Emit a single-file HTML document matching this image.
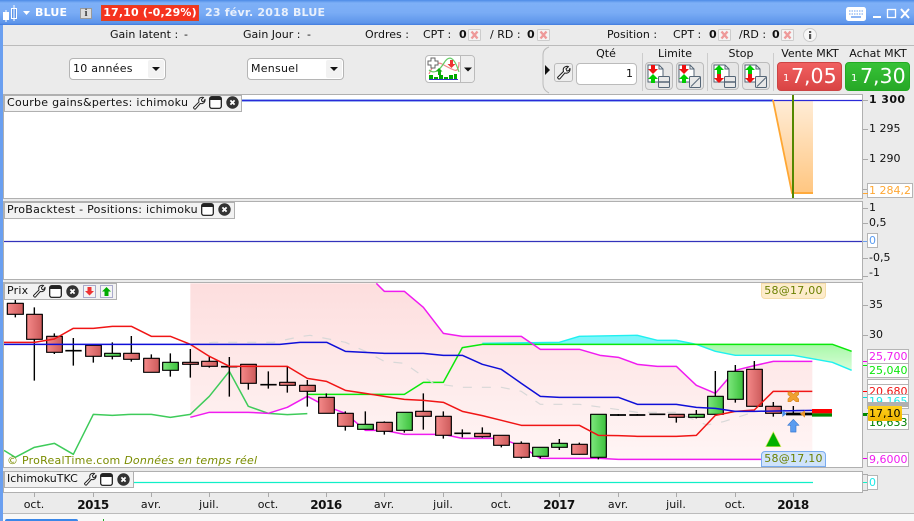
<!DOCTYPE html>
<html><head><meta charset="utf-8">
<style>
html,body{margin:0;padding:0}
body{width:914px;height:521px;overflow:hidden;position:relative;background:#ebebeb;font-family:"DejaVu Sans",sans-serif;font-size:11px;color:#111}
.t{position:absolute;white-space:nowrap;line-height:14px}
.c{transform:translateX(-50%)}
.b{font-weight:bold}
.a{position:absolute;box-sizing:border-box}
.p{position:absolute;background:#fff;border:1px solid #b0b0b0;box-sizing:border-box}
.tb{position:absolute;background:#f2f2f2;border:1px solid #b0b0b0;box-sizing:border-box;height:17px}
.lb{position:absolute;left:867px;width:42px;height:15px;background:#fff;border:1px solid #b5b5b5;box-sizing:border-box;font-size:11px;line-height:13px;padding-left:1px;white-space:nowrap;overflow:hidden}
.tk{position:absolute;height:1px;background:#aaa;left:863px;width:5px}
.sel{position:absolute;height:22px;width:97px;top:58px;background:#fff;border:1px solid #b5b5b5;border-radius:4px;box-sizing:border-box}
.btn{position:absolute;top:62px;width:28px;height:28px;background:#e6e6e6;border:1px solid #bbb;border-radius:4px;box-sizing:border-box}
.ttl{letter-spacing:.28px}
.yr{font-size:12px;font-weight:bold;letter-spacing:-.5px}
svg{position:absolute;overflow:visible}
</style></head><body>
<svg width="0" height="0" style="position:absolute"><defs>
<symbol id="wr" viewBox="0 0 14 14"><path d="M1.5 11.5 L7 6 Q6 2.500 9 1.500 Q10.500 1 11.500 1.500 L9.300 3.700 L10.300 5.700 L12.300 5 L13 3 Q13.500 6 11 7.300 Q9.500 8 8.300 7.400 L3.500 13 Q2 13.500 1.500 11.500Z" fill="#fff" stroke="#222" stroke-width="1"/></symbol>
<symbol id="wn" viewBox="0 0 13 13"><rect x=".7" y=".7" width="11.6" height="11.6" rx="2" fill="#fff" stroke="#111" stroke-width="1.2"/><rect x="1" y="1" width="11" height="3" fill="#222"/></symbol>
<symbol id="cl" viewBox="0 0 13 13"><circle cx="6.500" cy="6.500" r="6.200" fill="#333"/><path d="M4.400 4.400L8.600 8.600M8.600 4.400L4.400 8.600" stroke="#fff" stroke-width="1.800"/></symbol>
<symbol id="xb" viewBox="0 0 13 12"><rect x=".5" y=".5" width="12" height="11" rx="1" fill="#f4f4f4" stroke="#ccc"/><path d="M3.500 2.500L9.500 9.500M9.500 2.500L3.500 9.500" stroke="#ee9a9a" stroke-width="2.400"/></symbol>
<symbol id="doc" viewBox="0 0 26 26"><path d="M3 3H14L18 7V20H3Z" fill="#fff" stroke="#567" stroke-width="1"/><path d="M14 3V7H18" fill="none" stroke="#567"/></symbol>
</defs></svg>

<!-- title bar -->
<div class="a" style="left:0;top:0;width:914px;height:25px;background:linear-gradient(#4d8be6 0,#7eb0f7 12%,#7aacf5 50%,#5d95ea 92%,#3f7bdc 100%)"></div>
<svg style="left:0;top:0" width="30" height="25"><rect x="3" y="12" width="6" height="8" fill="#fff"/><path d="M6 10V22" stroke="#fff"/><rect x="11.500" y="8.500" width="5" height="10" fill="#5d95ea" stroke="#fff"/><path d="M14 5V21" stroke="#fff"/><path d="M23 11h7l-3.500 4z" fill="#fff"/></svg>
<div class="t b" style="left:35px;top:6px;color:#fff;letter-spacing:.2px">BLUE</div>
<div class="a" style="left:80px;top:8px;width:12px;height:11px;background:#dcdcdc;border:1px solid #999"></div>
<div class="t b c" style="left:86px;top:6px;color:#444;font-size:11px;font-family:'Liberation Serif',serif">i</div>
<div class="a" style="left:101px;top:5px;width:98px;height:16px;background:#f5331f;border:1px solid #d42"></div>
<div class="t b c" style="left:150px;top:6px;color:#fff;letter-spacing:.15px">17,10 (-0,29%)</div>
<div class="t b" style="left:205px;top:6px;color:#e8f0fc;letter-spacing:.22px">23 févr. 2018 BLUE</div>
<svg style="left:846px;top:6px" width="68" height="18"><rect x="0" y="1" width="20" height="14" rx="2.500" fill="#fff"/><path d="M3 5h14M3 8h14" stroke="#6a9ff0" stroke-dasharray="1.500 1"/><path d="M5 11h10" stroke="#6a9ff0" stroke-width="1.500"/><path d="M27 11h8" stroke="#fff" stroke-width="2"/><rect x="41.500" y="3.500" width="8" height="8" fill="none" stroke="#fff" stroke-width="1.300"/><path d="M55 3L63 12M63 3L55 12" stroke="#fff" stroke-width="2"/></svg>
<div class="a" style="left:0;top:25px;width:3px;height:496px;background:#6a9ff0"></div>

<!-- toolbar row 1 -->
<div class="a" style="left:3px;top:45px;width:911px;height:1px;background:#bbb"></div>
<div class="t" style="left:110px;top:28px">Gain latent :</div><div class="t" style="left:184px;top:28px">-</div>
<div class="t" style="left:243px;top:28px">Gain Jour :</div><div class="t" style="left:307px;top:28px">-</div>
<div class="t" style="left:365px;top:28px">Ordres :</div>
<div class="t" style="left:423px;top:28px">CPT :</div><div class="t b" style="left:459px;top:28px">0</div>
<svg style="left:468px;top:29px" width="13" height="12"><use href="#xb"/></svg>
<div class="t" style="left:490px;top:28px">/ RD :</div><div class="t b" style="left:527px;top:28px">0</div>
<svg style="left:537px;top:29px" width="13" height="12"><use href="#xb"/></svg>
<div class="t" style="left:607px;top:28px">Position :</div>
<div class="t" style="left:673px;top:28px">CPT :</div><div class="t b" style="left:709px;top:28px">0</div>
<svg style="left:718px;top:29px" width="13" height="12"><use href="#xb"/></svg>
<div class="t" style="left:739px;top:28px">/RD :</div><div class="t b" style="left:772px;top:28px">0</div>
<svg style="left:781px;top:29px" width="13" height="12"><use href="#xb"/></svg>
<svg style="left:803px;top:28px" width="14" height="14"><circle cx="7" cy="7" r="6.500" fill="#f6f6f6" stroke="#ccc"/><rect x="6" y="6" width="2.200" height="5" fill="#555"/><rect x="6" y="3" width="2.200" height="2" fill="#555"/></svg>

<!-- toolbar row 2 -->
<div class="sel" style="left:69px"></div><div class="t" style="left:73px;top:62px;letter-spacing:.25px">10 années</div>
<svg style="left:148px;top:59px" width="17" height="20"><rect width="16" height="18" y="1" rx="2" fill="#f2f2f2"/><path d="M4 8h8l-4 4z" fill="#111"/></svg>
<div class="sel" style="left:247px"></div><div class="t" style="left:251px;top:62px;letter-spacing:.25px">Mensuel</div>
<svg style="left:326px;top:59px" width="17" height="20"><rect width="16" height="18" y="1" rx="2" fill="#f2f2f2"/><path d="M4 8h8l-4 4z" fill="#111"/></svg>
<div class="a" style="left:425px;top:55px;width:50px;height:28px;background:#fff;border:1px solid #bbb;border-radius:4px"></div>
<div class="a" style="left:460px;top:56px;width:14px;height:26px;background:#eee;border-left:1px solid #bbb;border-radius:0 3px 3px 0"></div>
<svg style="left:426px;top:56px" width="48" height="26"><path d="M3 18Q9 4 16 8T28 14T33 6" fill="none" stroke="#e88" stroke-width="1.200"/><path d="M3 14Q10 20 18 7T33 16" fill="none" stroke="#6c6" stroke-width="1.200"/><path d="M5 2h4v3h3v4H9v3H5V9H2V5h3z" fill="#fff" stroke="#666"/><path d="M13 12l3.500 3.500H15V19h-3v-3.500H9.500z" fill="#1a1"/><path d="M24 4h3v4h2.500L25.500 12 21.500 8H24z" fill="#e33"/><path d="M3 19h4v4H3zM13 19h4v4h-4zM23 19h4v4h-4zM8 21h4v2H8zM18 21h4v2h-4zM28 18h3v5h-3z" fill="#0a0"/><path d="M3 23.500h29" stroke="#33c"/><path d="M38 11.500h8l-4 4z" fill="#111"/></svg>

<svg style="left:540px;top:46px" width="14" height="48"><path d="M9 1Q3 3 3 9V38Q3 44 9 47" fill="none" stroke="#bbb"/><path d="M5 19l5 5-5 5z" fill="#111"/></svg>
<div class="a" style="left:554px;top:63px;width:19px;height:19px;background:#eee;border:1px solid #bbb;border-radius:3px"></div>
<svg style="left:556px;top:65px" width="15" height="15"><use href="#wr" width="15" height="15"/></svg>
<div class="t c" style="left:606px;top:47px">Qté</div>
<div class="a" style="left:576px;top:63px;width:61px;height:22px;background:#fff;border:1px solid #bbb;border-radius:4px"></div>
<div class="t" style="left:626px;top:67px">1</div>
<div class="a" style="left:642px;top:53px;width:1px;height:38px;background:#ccc"></div>
<div class="a" style="left:707px;top:53px;width:1px;height:38px;background:#ccc"></div>
<div class="a" style="left:773px;top:53px;width:1px;height:38px;background:#ccc"></div>
<div class="t c" style="left:675px;top:47px">Limite</div>
<div class="t c" style="left:741px;top:47px">Stop</div>
<div class="btn" style="left:645px"></div><div class="btn" style="left:676px"></div><div class="btn" style="left:711px"></div><div class="btn" style="left:742px"></div>
<svg style="left:645px;top:62px" width="130" height="28">
<g><use href="#doc" x="0" y="0" width="26" height="26"/><path d="M6 3h4v4h3l-5 5-5-5h3z" fill="#e11"/><path d="M8 12l5 5h-3v4H6v-4H3z" fill="#0c0"/><rect x="13.500" y="14.500" width="11" height="11" rx="1" fill="#e8e8e8" stroke="#567"/><path d="M14 20h10" stroke="#567" stroke-width="1.500"/></g>
<g transform="translate(31 0)"><use href="#doc" x="0" y="0" width="26" height="26"/><path d="M6 3h4v4h3l-5 5-5-5h3z" fill="#e11"/><path d="M8 12l5 5h-3v4H6v-4H3z" fill="#0c0"/><rect x="13.500" y="14.500" width="11" height="11" rx="1" fill="#e8e8e8" stroke="#567"/><path d="M15 24.500l9-9" stroke="#567"/></g>
<g transform="translate(66 0)"><use href="#doc" x="0" y="0" width="26" height="26"/><path d="M8 3l5 5h-3v4H6V8H3z" fill="#0c0"/><path d="M6 12h4v4h3l-5 5-5-5h3z" fill="#e11"/><rect x="13.500" y="14.500" width="11" height="11" rx="1" fill="#e8e8e8" stroke="#567"/><path d="M14 20h10" stroke="#567" stroke-width="1.500"/></g>
<g transform="translate(97 0)"><use href="#doc" x="0" y="0" width="26" height="26"/><path d="M8 3l5 5h-3v4H6V8H3z" fill="#0c0"/><path d="M6 12h4v4h3l-5 5-5-5h3z" fill="#e11"/><rect x="13.500" y="14.500" width="11" height="11" rx="1" fill="#e8e8e8" stroke="#567"/><path d="M15 24.500l9-9" stroke="#567"/></g>
</svg>
<div class="t c" style="left:810px;top:47px">Vente MKT</div>
<div class="t c" style="left:878px;top:47px">Achat MKT</div>
<div class="a" style="left:777px;top:62px;width:65px;height:29px;background:linear-gradient(#f06060,#d94444);border:1px solid #c44;border-radius:4px"></div>
<div class="a" style="left:845px;top:62px;width:65px;height:29px;background:linear-gradient(#37c237,#26a826);border:1px solid #2a2;border-radius:4px"></div>
<div class="t" style="left:783px;top:72px;color:#fff;font-size:10px">1</div>
<div class="t" style="left:791px;top:65px;color:#fff;font-size:20.500px;line-height:22px">7,05</div>
<div class="t" style="left:851px;top:72px;color:#fff;font-size:10px">1</div>
<div class="t" style="left:860px;top:65px;color:#fff;font-size:20.500px;line-height:22px">7,30</div>

<!-- panels -->
<div class="p" style="left:3px;top:94px;width:860px;height:105px"></div>
<div class="p" style="left:3px;top:201px;width:860px;height:79px"></div>
<div class="p" style="left:3px;top:282px;width:860px;height:186px"></div>
<div class="p" style="left:3px;top:471px;width:860px;height:22px"></div>

<!-- panel 1 & 2 & 4 graphics -->
<svg style="left:0;top:0" width="914" height="521">
<defs><linearGradient id="og" x1="0" y1="0" x2="0" y2="1"><stop offset="0" stop-color="#ffecd6"/><stop offset="1" stop-color="#ffc680"/></linearGradient>
<linearGradient id="pk" x1="0" y1="0" x2="0" y2="1"><stop offset="0" stop-color="#fddede"/><stop offset="1" stop-color="#fff5f5"/></linearGradient>
<linearGradient id="gg" x1="0" y1="0" x2="0" y2="1"><stop offset="0" stop-color="#a8f8a8"/><stop offset="1" stop-color="#d8fdd8"/></linearGradient>
<linearGradient id="rc" x1="0" y1="0" x2="1" y2="0"><stop offset="0" stop-color="#f58a8a"/><stop offset="1" stop-color="#cc5a5a"/></linearGradient>
<linearGradient id="gc" x1="0" y1="0" x2="1" y2="0"><stop offset="0" stop-color="#7ee87e"/><stop offset="1" stop-color="#3cc03c"/></linearGradient></defs>
<path d="M773 101L792 194H813V101Z" fill="url(#og)"/>
<path d="M4 100.500H773" stroke="#a8c4f4" stroke-width="3"/>
<path d="M4 100.500H862" stroke="#2a2ad8" stroke-width="1.300"/>
<path d="M773 100L792 193H813" fill="none" stroke="#ffa733" stroke-width="1.800"/>
<path d="M793 95V198" stroke="#558800" stroke-width="2"/>
<path d="M4 241.500H862" stroke="#3333bb" stroke-width="1.200"/>
<path d="M133 482.500H813" stroke="#10f0c8" stroke-width="1.200"/>

<!-- price panel, zoom coordinates -->
<g transform="translate(0,280) scale(.33333)" fill="none" stroke-linejoin="round">
<clipPath id="clp"><rect x="12" y="9" width="2573" height="552"/></clipPath>
<g clip-path="url(#clp)">
<!-- pink cloud -->
<path d="M571 10H1129L1153 34H1213L1270 82L1330 160L1387 169H1564L1621 208H1738L1800 226L1855 232L1912 253L1972 259L2029 259L2089 316L2146 340L2206 271L2263 257L2320 244L2437 244V538H1855L1800 535H1621L1564 499L1504 475H1387L1330 463H1213L1153 451H1096L1036 400L979 379L922 349L900 362L862 382L805 400L745 397H628L571 412Z" fill="url(#pk)"/>
<!-- cloud fills -->
<path d="M1447 190L1678 187L1738 169H1800L1912 166L1972 181H2029L2089 193H1447Z" fill="#7df6fa"/>
<path d="M2089 193H2497L2555 214V271L2497 247L2380 226H2206L2146 214Z" fill="url(#gg)"/>
<!-- lines -->
<polyline points="1447,190 1678,187 1738,169 1912,166 1972,181 2029,181 2089,193 2146,214 2206,226 2380,226 2497,247 2555,271" stroke="#20f0f0" stroke-width="4.200"/>
<polyline points="12,511 46,532 103,502 163,490 220,523 280,403 337,406 394,403 454,403 511,412 571,403 628,349 688,274 745,379 805,400 862,404 922,401" stroke="#3ecb5a" stroke-width="4.500"/>
<polyline points="922,343 1213,343 1270,307 1330,307 1387,203 1447,193 2497,193 2555,214" stroke="#0be80b" stroke-width="4.500"/>
<polyline points="571,193 640,187 820,187 900,170 930,166 1036,187 1096,214 1153,244 1213,250 1300,310 1387,322 1504,322 1564,334 1621,373 1738,373 1822,384 1912,397 2029,397 2120,435 2170,425 2265,395 2320,390 2440,390" stroke="#d8d8d8" stroke-width="3.600" stroke-dasharray="27 30"/>
<polyline points="571,412 628,397 745,397 805,400 862,382 922,349 979,379 1036,400 1096,451 1153,451 1213,463 1330,463 1387,475 1504,475 1564,499 1621,535 1800,535 1855,538 2283,538" stroke="#f01cf0" stroke-width="4.500"/>
<polyline points="1129,10 1153,34 1213,34 1270,82 1330,160 1387,169 1564,169 1621,208 1738,208 1800,226 1855,232 1912,253 1972,259 2029,259 2089,316 2146,340 2206,271 2263,257 2320,244 2437,244" stroke="#f01cf0" stroke-width="4.500"/>
</g>
<!-- candles -->
<g stroke="#000" stroke-width="4.200">
<path d="M46 60V112M103 82V302M163 160V222M220 174V257M280 195V248M337 187V238M394 168V245M454 223V277M511 220V290M571 207V293M628 228V263M688 231V350M745 253V329M805 274V326M862 259V338M922 300V380M979 340V400M1036 394V452M1096 394V449M1153 424V464M1213 397V458M1270 340V449M1330 394V476M1387 448V472M1447 442V473M1504 466V502M1564 484V536M1621 502V535M1678 477V510M1738 488V524M1795 403V538M1855 402V408M1912 402V407M1972 402V404M2029 403V428M2089 390V415M2146 273V403M2206 255V368M2263 243V380M2320 366V410M2380 378V405"/>
<g fill="url(#rc)" stroke-width="3.600">
<rect x="22" y="70" width="48" height="33"/><rect x="80" y="103" width="47" height="75"/><rect x="140" y="169" width="47" height="48"/><rect x="257" y="196" width="47" height="33"/><rect x="371" y="220" width="47" height="18"/><rect x="431" y="235" width="47" height="42"/><rect x="548" y="247" width="47" height="6"/><rect x="605" y="244" width="47" height="15"/><rect x="722" y="253" width="47" height="57"/><rect x="839" y="307" width="47" height="9"/><rect x="899" y="316" width="47" height="18"/><rect x="956" y="352" width="47" height="48"/><rect x="1013" y="400" width="47" height="39"/><rect x="1130" y="427" width="47" height="27"/><rect x="1247" y="394" width="47" height="15"/><rect x="1307" y="409" width="47" height="57"/><rect x="1424" y="460" width="47" height="10"/><rect x="1481" y="466" width="47" height="30"/><rect x="1541" y="490" width="47" height="42"/><rect x="1715" y="493" width="47" height="30"/><rect x="2006" y="403" width="47" height="9"/><rect x="2240" y="268" width="47" height="111"/><rect x="2297" y="379" width="47" height="21"/>
</g>
<g fill="url(#gc)" stroke-width="3.600">
<rect x="314" y="220" width="47" height="9"/><rect x="488" y="247" width="47" height="24"/><rect x="1073" y="433" width="47" height="15"/><rect x="1190" y="397" width="47" height="54"/><rect x="1598" y="502" width="47" height="27"/><rect x="1655" y="490" width="47" height="12"/><rect x="1772" y="403" width="47" height="129"/><rect x="2066" y="403" width="47" height="9"/><rect x="2123" y="349" width="47" height="54"/><rect x="2183" y="274" width="47" height="84"/>
</g>
<path d="M196 212H245M663 260H712M781 314H830M1363 460H1412M1830 405H1878M1888 405H1936M1948 403H1996" stroke-width="5"/>
<path d="M2358 402H2436" stroke-width="8"/>
</g>
<polyline points="12,187 103,187 163,177 220,145 280,145 337,139 394,139 454,169 511,169 571,193 628,229 688,259 862,259 922,295 979,304 1036,331 1096,340 1153,349 1213,358 1270,361 1330,367 1387,394 1447,407 1504,421 1564,436 1738,436 1795,466 1855,467 1912,469 2029,469 2089,466 2146,406 2206,394 2263,390 2320,334 2437,334" stroke="#f01515" stroke-width="4.500"/>
<polyline points="12,193 571,193 840,193 900,187 980,187 1036,214 1153,220 1270,220 1330,226 1387,226 1447,253 1504,268 1564,310 1621,349 1678,352 1855,352 1912,373 2029,373 2089,382 2146,385 2206,394 2263,394 2437,391" stroke="#0f0fd8" stroke-width="4.500"/>
<!-- trade markers -->
<path d="M2436 387H2496V400H2436Z" fill="#f00"/><path d="M2436 400H2496V410H2436Z" fill="#080"/>
<path d="M2320 455L2297 500H2343Z" fill="#00b000" stroke="#d8e860" stroke-width="2"/>
<path d="M2380 418L2363 436H2372V456H2388V436H2397Z" fill="#5a9cf0" stroke="#3878d0" stroke-width="2"/>
<path d="M2364 336L2372 336L2380 343L2388 336L2396 336V344L2389 350L2396 357V365H2388L2380 358L2372 365H2364V357L2371 350L2364 344Z" fill="#f0a030" stroke="#d88820" stroke-width="2"/>
<path d="M2347 391L2360 401L2347 411Z" fill="#4a90e8"/><path d="M2415 391L2400 401L2415 413Z" fill="#e8932a"/>
</g>
</svg>

<!-- price labels on chart -->
<div class="a" style="left:761px;top:283px;width:65px;height:16px;background:#fdeccb;border:1px solid #f5dca8;border-radius:0 0 4px 4px;text-align:center;color:#6b8000;font-size:11px;letter-spacing:.25px;line-height:14px">58@17,00</div>
<div class="a" style="left:761px;top:451px;width:65px;height:16px;background:#cfe3fb;border:1px solid #79abee;border-radius:4px 4px 0 0;text-align:center;color:#6b8000;font-size:11px;letter-spacing:.25px;line-height:14px">58@17,10</div>
<div class="t" style="left:7px;top:454px;color:#7a8c00;letter-spacing:.23px">© ProRealTime.com <i>Données en temps réel</i></div>

<!-- panel titles -->
<div class="tb" style="left:4px;top:95px;width:238px"></div><div class="t ttl" style="left:7px;top:96px">Courbe gains&amp;pertes: ichimoku</div>
<svg style="left:192px;top:96px" width="14" height="14"><use href="#wr" width="14" height="14"/></svg>
<svg style="left:209px;top:96px" width="13" height="13"><use href="#wn" width="13" height="13"/></svg>
<svg style="left:226px;top:96px" width="13" height="13"><use href="#cl" width="13" height="13"/></svg>
<div class="tb" style="left:4px;top:202px;width:231px"></div><div class="t ttl" style="left:7px;top:203px">ProBacktest - Positions: ichimoku</div>
<svg style="left:201px;top:203px" width="13" height="13"><use href="#wn" width="13" height="13"/></svg>
<svg style="left:218px;top:203px" width="13" height="13"><use href="#cl" width="13" height="13"/></svg>
<div class="tb" style="left:4px;top:283px;width:113px"></div><div class="t" style="left:7px;top:284px;letter-spacing:.2px">Prix</div>
<svg style="left:32px;top:284px" width="14" height="14"><use href="#wr" width="14" height="14"/></svg>
<svg style="left:49px;top:285px" width="13" height="13"><use href="#wn" width="13" height="13"/></svg>
<svg style="left:66px;top:285px" width="13" height="13"><use href="#cl" width="13" height="13"/></svg>
<svg style="left:83px;top:285px" width="30" height="13"><rect x=".5" y=".5" width="12" height="12" fill="#f4f4f4" stroke="#aac"/><path d="M4.500 2h4v4h2.500l-4.500 4.500L2 6h2.500z" fill="#e33"/><rect x="17.500" y=".5" width="12" height="12" fill="#f4f4f4" stroke="#aac"/><path d="M23.500 2L28 6.500h-2.500V11h-4V6.500H19z" fill="#0a0"/></svg>
<div class="tb" style="left:4px;top:471px;width:130px"></div><div class="t" style="left:7px;top:472px">IchimokuTKC</div>
<svg style="left:83px;top:472px" width="14" height="14"><use href="#wr" width="14" height="14"/></svg>
<svg style="left:100px;top:473px" width="13" height="13"><use href="#wn" width="13" height="13"/></svg>
<svg style="left:117px;top:473px" width="13" height="13"><use href="#cl" width="13" height="13"/></svg>

<!-- right axis -->
<div class="tk" style="top:100px"></div><div class="tk" style="top:129px"></div><div class="tk" style="top:159px"></div><div class="tk" style="top:189px"></div>
<div class="t b" style="left:869px;top:93px;letter-spacing:.4px">1 300</div>
<div class="t" style="left:869px;top:122px">1 295</div>
<div class="t" style="left:869px;top:152px">1 290</div>
<div class="lb" style="top:183px;color:#ffa733;width:46px;height:15px">1 284,2</div>
<div class="tk" style="top:193px;background:#ffa733"></div>
<div class="tk" style="top:208px"></div><div class="tk" style="top:223px"></div><div class="tk" style="top:241px;background:#6a9ff0"></div><div class="tk" style="top:258px"></div><div class="tk" style="top:276px"></div>
<div class="t" style="left:869px;top:201px">1</div>
<div class="t" style="left:869px;top:216px">0,5</div>
<div class="lb" style="top:233px;width:11px;color:#5a9cf0">0</div>
<div class="t" style="left:869px;top:251px">-0,5</div>
<div class="t" style="left:869px;top:266px">-1</div>
<div class="tk" style="top:305px"></div><div class="tk" style="top:335px"></div>
<div class="t" style="left:869px;top:298px">35</div>
<div class="t" style="left:869px;top:328px">30</div>
<div class="tk" style="top:361px;background:#e0e"></div><div class="tk" style="top:365px;background:#0e0"></div><div class="tk" style="top:391px;background:#f00"></div><div class="tk" style="top:397px;background:#0dd"></div><div class="tk" style="top:413px;background:#080;height:3px"></div><div class="tk" style="top:458px;background:#e0e"></div>
<div class="lb" style="top:349px;color:#f01cf0">25,700</div>
<div class="lb" style="top:363px;color:#0be80b">25,040</div>
<div class="lb" style="top:379px;height:6px"></div>
<div class="lb" style="top:384px;color:#f01515">20,680</div>
<div class="lb" style="top:394px;color:#20e8e8">19,165</div>
<div class="lb" style="top:414px;height:16px;color:#008000;line-height:16px">16,633</div>
<div class="a" style="left:867px;top:402px;width:42px;height:5px;background:#b0b0b0"></div>
<div class="a" style="left:868px;top:406px;width:34px;height:15px;background:linear-gradient(#ffd21e,#efb400);border-radius:1px;line-height:15px;padding-left:1px;color:#000">17,10</div>
<div class="lb" style="top:452px;color:#f01cf0">9,6000</div>
<div class="tk" style="top:482px;background:#10f0c8"></div><div class="tk" style="top:474px"></div><div class="tk" style="top:490px"></div>
<div class="lb" style="top:475px;width:11px;color:#20e8e8">0</div>

<!-- bottom axis -->
<svg style="left:0;top:492px" width="862" height="6"><path d="M34.500 0V5M93.500 0V5M151.500 0V5M209.500 0V5M268.500 0V5M326.500 0V5M384.500 0V5M443.500 0V5M501.500 0V5M559.500 0V5M618.500 0V5M676.500 0V5M735.500 0V5M793.500 0V5" stroke="#aaa"/></svg>
<div class="t c" style="left:34px;top:498px">oct.</div>
<div class="t c yr" style="left:93px;top:498px">2015</div>
<div class="t c" style="left:151px;top:498px">avr.</div>
<div class="t c" style="left:209px;top:498px">juil.</div>
<div class="t c" style="left:268px;top:498px">oct.</div>
<div class="t c yr" style="left:326px;top:498px">2016</div>
<div class="t c" style="left:384px;top:498px">avr.</div>
<div class="t c" style="left:443px;top:498px">juil.</div>
<div class="t c" style="left:501px;top:498px">oct.</div>
<div class="t c yr" style="left:559px;top:498px">2017</div>
<div class="t c" style="left:618px;top:498px">avr.</div>
<div class="t c" style="left:676px;top:498px">juil.</div>
<div class="t c" style="left:735px;top:498px">oct.</div>
<div class="t c yr" style="left:793px;top:498px">2018</div>
<div class="a" style="left:3px;top:513px;width:911px;height:8px;background:#f8f8f8;border-top:1px solid #bbb"></div>
<div class="a" style="left:5px;top:519px;width:73px;height:2px;background:#3a87e8;border-radius:3px 3px 0 0"></div>
<div class="a" style="left:103px;top:519px;width:1px;height:2px;background:#2a2"></div>
</body></html>
